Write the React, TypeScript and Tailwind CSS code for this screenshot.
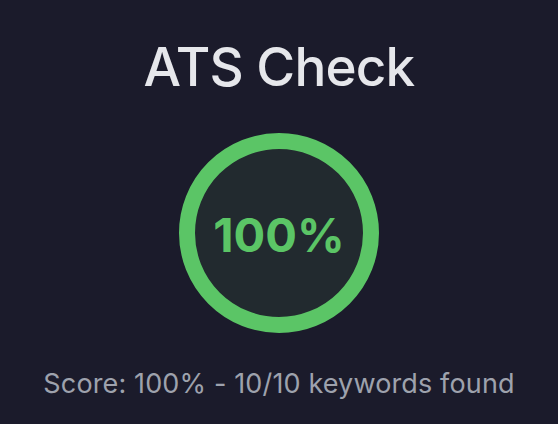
import React from 'react';

const App: React.FC = () => {
  const score = 100;
  const found = 10;
  const total = 10;

  return (
    <div className="min-h-screen w-full bg-[#1b1b2b] flex flex-col items-center pt-[41px] font-['Inter',sans-serif]">
      {/* Title */}
      <h1 className="text-[53px] leading-none font-medium tracking-[-0.015em] text-[#e6e7eb]">ATS Check</h1>

      {/* Score ring */}
      <div className="mt-[39px] w-[200px] h-[200px] rounded-full border-[16px] border-[#5bc566] bg-[#222a2f] flex items-center justify-center">
        <span className="text-[47px] leading-none font-bold text-[#5bc566] pt-[2px]">{score}%</span>
      </div>

      {/* Summary */}
      <p className="mt-[37px] text-[27px] leading-none tracking-[0.005em] text-[#9ea2ad]">
        Score: {score}% - {found}/{total} keywords found
      </p>
    </div>
  );
};

export default App;
